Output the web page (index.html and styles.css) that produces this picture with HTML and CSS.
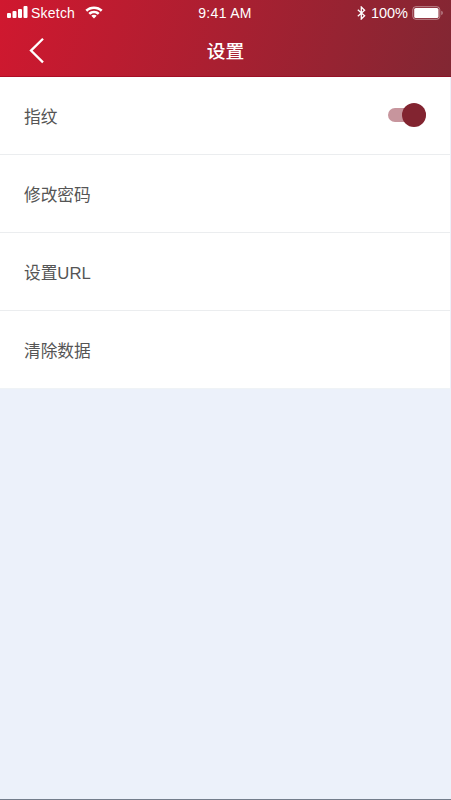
FILE: index.html
```html
<!DOCTYPE html>
<html lang="zh-CN">
<head>
<meta charset="utf-8">
<meta name="viewport" content="width=device-width, initial-scale=1">
<title>设置</title>
<link rel="stylesheet" href="styles.css">
</head>
<body>
<div class="screen">
  <header class="header">
    <div class="status">
      <div class="status-left">
        <svg class="signal" width="21" height="12" viewBox="0 0 21 12"><rect x="0" y="7" width="4" height="5" rx="1"/><rect x="5.5" y="5" width="4" height="7" rx="1"/><rect x="11" y="3" width="4" height="9" rx="1"/><rect x="16.5" y="0" width="4" height="12" rx="1"/></svg>
        <span class="carrier">Sketch</span>
        <svg class="wifi" width="18" height="13" viewBox="0 0 18 13"><path d="M9 0.5C5.7.5 2.7 1.7.4 3.8L2.2 5.7C4 4 6.4 3 9 3s5 1 6.800 2.700l1.800-1.900C15.300 1.700 12.300.5 9 .5ZM9 4.700c-2.100 0-4.100.8-5.600 2.200l1.800 1.900C6.200 7.800 7.500 7.200 9 7.200s2.800.6 3.800 1.600l1.800-1.900C13.100 5.500 11.100 4.700 9 4.700ZM9 8.700c-1.100 0-2 .4-2.700 1.100L9 12.600l2.700-2.800C11 9.100 10.100 8.700 9 8.700Z"/></svg>
      </div>
      <span class="clock">9:41 AM</span>
      <div class="status-right">
        <svg class="bluetooth" width="9" height="14" viewBox="0 0 9 14"><path d="M.8 3.800 7.600 9.800 4.300 13V1l3.300 3.200L.8 10.200"/></svg>
        <span class="percent">100%</span>
        <svg class="battery" width="31" height="14" viewBox="0 0 31 14"><rect class="battery-case" x=".8" y=".7" width="27" height="12.600" rx="3"/><rect x="2.200" y="2" width="24.300" height="10" rx="1.600"/><path class="battery-tip" d="M29.300 4.800q1.500.6 1.500 2.200t-1.500 2.200Z"/></svg>
      </div>
    </div>
    <div class="nav">
      <svg class="back" width="16" height="27" viewBox="0 0 16 27"><path d="M14 1.800 2 13.600 14 25.400"/></svg>
      <h1 class="title">设置</h1>
    </div>
  </header>
  <main class="list">
    <div class="row"><span>指纹</span><div class="switch"><div class="knob"></div></div></div>
    <div class="row"><span>修改密码</span></div>
    <div class="row"><span>设置URL</span></div>
    <div class="row"><span>清除数据</span></div>
  </main>
</div>
</body>
</html>
```
FILE: styles.css
```css
* { box-sizing: border-box; }
body {
  margin: 0;
  font-family: "Liberation Sans", "Noto Sans CJK SC", sans-serif;
}
.screen {
  height: 800px;
  background: #ecf1fa;
  border-bottom: 1px solid #737d8b;
}
.header {
  height: 77px;
  color: #fff;
  background: linear-gradient(105deg, #d0182f 0%, #822733 100%);
  border-bottom: 1px solid rgba(145, 0, 28, .5);
}
.status {
  display: grid;
  grid-template-columns: 1fr auto 1fr;
  align-items: center;
  height: 25px;
  padding: 0 8px 0 7px;
  font-size: 14px;
  line-height: 25px;
}
.status svg { fill: #fff; flex: none; }
.status span { padding-top: 1px; line-height: 24px; }
.status-left, .status-right { display: flex; align-items: center; }
.status-right { justify-content: flex-end; }
.signal { margin-top: -1px; }
.carrier { margin-left: 3px; letter-spacing: .22px; }
.wifi { margin-left: 10px; margin-top: -1px; }
.clock { font-size: 14px; letter-spacing: .3px; }
.status .bluetooth { fill: none; stroke: #fff; stroke-width: 1.300; }
.percent { margin: 0 4px 0 5px; font-size: 14.500px; }
.status .battery-case { fill: none; stroke: #fff; stroke-opacity: .45; stroke-width: 1; }
.battery-tip { fill-opacity: .45; }
.nav {
  display: grid;
  grid-template-columns: 1fr auto 1fr;
  align-items: center;
  height: 51px;
  padding: 0 29px;
}
.back { fill: none; stroke: #fff; stroke-width: 2.300; }
.title {
  margin: 0;
  padding-top: 2px;
  font-size: 18.700px;
  font-weight: 500;
  line-height: 28px;
}
.list { margin-right: 1px; background: #fff; }
.row {
  display: flex;
  align-items: center;
  justify-content: space-between;
  height: 78px;
  padding: 0 24px;
  border-bottom: 1px solid #ebedef;
  color: #555;
  font-size: 16.700px;
  font-weight: 400;
}
.row:last-child { border-bottom-color: #eff3f6; }
.switch {
  display: flex;
  align-items: center;
  justify-content: flex-end;
  width: 38px;
  height: 14px;
  margin-bottom: 2px;
  border-radius: 7px;
  background: #c7959d;
}
.knob {
  flex: none;
  width: 24px;
  height: 24px;
  border-radius: 50%;
  background: #822430;
}
```
